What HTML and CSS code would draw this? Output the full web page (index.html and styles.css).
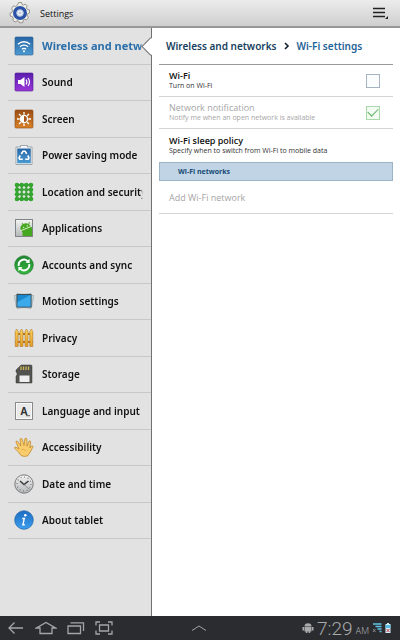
FILE: index.html
```
<!DOCTYPE html>
<html lang="en">

<head>
  <meta charset="UTF-8">
  <meta name="viewport" content="width=device-width, initial-scale=1.0">
  <title>Settings</title>
  <link rel="stylesheet" href="styles.css">
</head>

<body>
  <!-- Shared gradients for the icons -->
  <svg class="defs" width="0" height="0" aria-hidden="true">
    <defs>
      <linearGradient id="blue" x2="0" y2="1"><stop stop-color="#2866a5"/><stop offset="1" stop-color="#4b9ad2"/></linearGradient>
      <linearGradient id="purple" x2="0" y2="1"><stop stop-color="#5a1fae"/><stop offset="1" stop-color="#9a35d8"/></linearGradient>
      <linearGradient id="orange" x2="0" y2="1"><stop stop-color="#9a4c14"/><stop offset="1" stop-color="#d98128"/></linearGradient>
      <linearGradient id="green" x2="0" y2="1"><stop stop-color="#1e8430"/><stop offset="1" stop-color="#35b53c"/></linearGradient>
      <linearGradient id="info" x2="0" y2="1"><stop stop-color="#1c6cc0"/><stop offset="1" stop-color="#3f9ff0"/></linearGradient>
      <linearGradient id="gold" x2="0" y2="1"><stop stop-color="#f9d25a"/><stop offset="1" stop-color="#e09c2c"/></linearGradient>
      <linearGradient id="silver" x2="0" y2="1"><stop stop-color="#f4f4f4"/><stop offset="1" stop-color="#b4b6b8"/></linearGradient>
    </defs>
  </svg>

  <header class="topbar">
    <svg class="logo" viewBox="0 0 22 22">
      <path d="M9.500 .5h3l.5 2 1.500.5L16.300 2l2 2-.9 1.800.8 1.600 2.300.6v3l-2 1-.3 1.600 1.200 1.900-1.700 2.300-2.200-.5-1.300.9-.4 2.300-3 .5-1.200-2-1.500-.2-2 1.200-2.300-1.800.5-2.200-.9-1.400-2.200-.6v-3l2-.9.4-1.700L2.600 6.300l1.800-2.400 2.200.6L8.500 3z" fill="#f1eee8" stroke="#8f8b84" stroke-width=".9" stroke-linejoin="round"/>
      <circle cx="11" cy="11" r="5.200" fill="none" stroke="#2b52a6" stroke-width="3.600"/>
      <circle cx="11" cy="11" r="3.300" fill="#f2f4f8" stroke="#93a7d4" stroke-width=".8"/>
      <circle cx="11" cy="11" r="1.500" fill="#c4cbdc"/>
    </svg>
    <h1 class="title">Settings</h1>
    <button class="menu-button" aria-label="Menu">
      <svg width="18" height="14" viewBox="0 0 18 14">
        <path d="M1 2.500h12M1 6.500h12M1 10.500h12" stroke="#222" stroke-width="1.300"/>
        <path d="M16 10v3h-3z" fill="#222"/>
      </svg>
    </button>
  </header>

  <div class="content">
    <nav class="sidebar">
      <ul class="menu">
        <li class="item active">
          <a href="#">
            <svg class="icon" viewBox="0 0 20 20">
              <rect x="1" y="1" width="18" height="18" rx="1" fill="url(#blue)" stroke="#2a5d91" stroke-width=".6"/>
              <path d="M4 8.2a8.6 8.6 0 0 1 12 0M6 10.8a5.6 5.6 0 0 1 8 0M8 13.2a2.8 2.8 0 0 1 4 0" fill="none" stroke="#fff" stroke-width="1.4"/>
              <circle cx="10" cy="15.3" r="1" fill="#fff"/>
            </svg>
            <span class="label">Wireless and networks</span>
          </a>
        </li>
        <li class="item">
          <a href="#">
            <svg class="icon" viewBox="0 0 20 20">
              <rect x="1" y="1" width="18" height="18" rx="1" fill="url(#purple)" stroke="#4d1b90" stroke-width=".6"/>
              <path d="M4 8h2.5L10.500 5v10L6.500 12H4z" fill="#fff"/>
              <path d="M12 7.500q1.800 2.500 0 5M14 6q3 4 0 8" fill="none" stroke="#fff" stroke-width="1.200"/>
            </svg>
            <span class="label">Sound</span>
          </a>
        </li>
        <li class="item">
          <a href="#">
            <svg class="icon" viewBox="0 0 20 20">
              <rect x="1" y="1" width="18" height="18" rx="1" fill="url(#orange)" stroke="#8b4a18" stroke-width=".6"/>
              <path d="M10 3v2.500M10 14.500V17M3 10h2.500M14.500 10H17M5 5l1.800 1.800M13.200 13.200L15 15M15 5l-1.800 1.800M5 15l1.800-1.800" stroke="#fff" stroke-width="1.300"/>
              <circle cx="10" cy="10" r="3.600" fill="#a75418" stroke="#fff" stroke-width="1.400"/>
              <path d="M10 6.400a3.600 3.600 0 0 0 0 7.200z" fill="#fff"/>
            </svg>
            <span class="label">Screen</span>
          </a>
        </li>
        <li class="item">
          <a href="#">
            <svg class="icon" viewBox="0 0 20 20">
              <path d="M2 2h4.500V.5h7V2H18v17.500H2z" fill="#f4f7f9" stroke="#8b959c" stroke-width=".8"/>
              <rect x="3.200" y="3.500" width="13.600" height="14.800" fill="url(#blue)"/>
              <path d="M7.300 9L9 6.300h2.200l1.500 2.500M13.700 10.500l1.300 2.300-.8 1.500h-3M8.800 14.300H5.800L5 12.800l1.300-2.300" fill="none" stroke="#fff" stroke-width="1.600" stroke-linejoin="round"/>
            </svg>
            <span class="label">Power saving mode</span>
          </a>
        </li>
        <li class="item">
          <a href="#">
            <svg class="icon" viewBox="0 0 20 20">
              <path d="M3 3h14v14H3zM3 7.700h14M3 12.300h14M7.700 3v14M12.300 3v14" fill="none" stroke="#3b9a37" stroke-width="1.800"/>
              <g fill="#35a532">
                <circle cx="3" cy="3" r="2.300"/><circle cx="7.700" cy="3" r="2.300"/><circle cx="12.300" cy="3" r="2.300"/><circle cx="17" cy="3" r="2.300"/>
                <circle cx="3" cy="7.700" r="2.300"/><circle cx="17" cy="7.700" r="2.300"/><circle cx="7.700" cy="7.700" r="1.700"/><circle cx="12.300" cy="7.700" r="1.700"/>
                <circle cx="3" cy="12.300" r="2.300"/><circle cx="17" cy="12.300" r="2.300"/><circle cx="7.700" cy="12.300" r="1.700"/><circle cx="12.300" cy="12.300" r="1.700"/>
                <circle cx="3" cy="17" r="2.300"/><circle cx="7.700" cy="17" r="2.300"/><circle cx="12.300" cy="17" r="2.300"/><circle cx="17" cy="17" r="2.300"/>
              </g>
            </svg>
            <span class="label">Location and security</span>
          </a>
        </li>
        <li class="item">
          <a href="#">
            <svg class="icon" viewBox="0 0 20 20">
              <rect x="1.500" y="1.500" width="17" height="17" fill="url(#silver)" stroke="#7f8489"/>
              <g fill="#46a821">
                <path d="M6.500 11.500A5.300 5.300 0 0 1 16 7.500l2 2V18H8.500v-3.500z"/>
                <path d="M8 5l2 3M15.500 4l-1 3" stroke="#46a821" stroke-width=".9"/>
              </g>
              <path d="M6.500 12.800l11-4.500" stroke="#e6f3dc" stroke-width=".9"/>
              <circle cx="9.700" cy="9.300" r=".6" fill="#fff"/><circle cx="13.300" cy="7.900" r=".6" fill="#fff"/>
            </svg>
            <span class="label">Applications</span>
          </a>
        </li>
        <li class="item">
          <a href="#">
            <svg class="icon" viewBox="0 0 20 20">
              <circle cx="10" cy="10" r="9.300" fill="url(#green)" stroke="#1c752b" stroke-width=".6"/>
              <path d="M4.800 11A5.300 5.300 0 0 1 13.500 6M15.200 9A5.300 5.300 0 0 1 6.500 14" fill="none" stroke="#fff" stroke-width="1.900"/>
              <path d="M11.500 7.800L15.600 8V3.800zM8.500 12.200L4.400 12v4.200z" fill="#fff"/>
            </svg>
            <span class="label">Accounts and sync</span>
          </a>
        </li>
        <li class="item">
          <a href="#">
            <svg class="icon" viewBox="0 0 20 20">
              <path d="M0 4.500l17-2 1 13-15 2zM3 2.500l17 2-3 13-15-2z" fill="#c3d1d8" stroke="#8798a1" stroke-width=".5"/>
              <path d="M2.500 3h15v13.500h-15z" fill="#3d4c56"/>
              <path d="M3.500 4h13v11.500h-13z" fill="#1989cf"/>
              <path d="M3.500 15.500V11L16.500 4v11.500z" fill="#3caaea"/>
            </svg>
            <span class="label">Motion settings</span>
          </a>
        </li>
        <li class="item">
          <a href="#">
            <svg class="icon" viewBox="0 0 20 20">
              <path d="M1 6h18M1 14h18" stroke="#bb7820" stroke-width="2"/>
              <path d="M1.200 18.500v-15L2.700 1l1.500 2.500v15zM6 18.500v-15L7.500 1 9 3.500v15zM11 18.500v-15L12.500 1 14 3.500v15zM15.800 18.500v-15L17.300 1l1.500 2.500v15z" fill="url(#gold)" stroke="#a86c1c" stroke-width=".5"/>
            </svg>
            <span class="label">Privacy</span>
          </a>
        </li>
        <li class="item">
          <a href="#">
            <svg class="icon" viewBox="0 0 20 20">
              <path d="M7 1h10q1 0 1 1v17H2v-7l1-1V9L2 8V6z" fill="#53534f" stroke="#3a3a38" stroke-width=".5"/>
              <path d="M7 2.500V6M9.500 2.500V6M12 2.500V6M14.500 2.500V6" stroke="#cdb558" stroke-width="1.300"/>
              <path d="M5.500 11.500h10V18h-10z" fill="#efefef"/>
            </svg>
            <span class="label">Storage</span>
          </a>
        </li>
        <li class="item">
          <a href="#">
            <svg class="icon" viewBox="0 0 20 20">
              <rect x="1.500" y="1.500" width="17" height="17" fill="#e9e9e9" stroke="#888a8c"/>
              <rect x="2.500" y="2.500" width="15" height="15" fill="none" stroke="#f9f9f9"/>
              <text class="key-letter" x="10" y="13.500" text-anchor="middle">A</text>
              <path d="M12 14.700h4" stroke="#333" stroke-width=".8"/>
            </svg>
            <span class="label">Language and input</span>
          </a>
        </li>
        <li class="item">
          <a href="#">
            <svg class="icon" viewBox="0 0 20 20">
              <path d="M7 18.500L4.500 15 .8 11.500q-.6-1.700 1.200-1.300L5 12 2 5.200q0-1.900 1.800-.7L6.800 9 6 2.200q.9-1.900 2.200 0L10 8.500l.8-6.700q1.300-1.500 2.100.1L13 9.200l2-5q1.500-1 1.700.8L15.800 11l1.500-2q1.700-.6 1.700.8L16.300 15l-2.800 4q-3.500 1-6.500-.5z" fill="#f9cd6c" stroke="#b98022" stroke-width=".7"/>
              <path d="M7 13q3-2 5 1" fill="none" stroke="#dda23c" stroke-width=".7"/>
            </svg>
            <span class="label">Accessibility</span>
          </a>
        </li>
        <li class="item">
          <a href="#">
            <svg class="icon" viewBox="0 0 20 20">
              <circle cx="10" cy="10" r="9.200" fill="url(#silver)" stroke="#77797b"/>
              <circle cx="10" cy="10" r="7" fill="none" stroke="#666" stroke-width="1.200" stroke-dasharray=".8 2.865"/>
              <path d="M6 7l4 3.500L14.500 7" fill="none" stroke="#333" stroke-width="1.400"/>
              <path d="M9 9.500l6.500 6" stroke="#777" stroke-width=".7"/>
            </svg>
            <span class="label">Date and time</span>
          </a>
        </li>
        <li class="item">
          <a href="#">
            <svg class="icon" viewBox="0 0 20 20">
              <circle cx="10" cy="10" r="9.300" fill="url(#info)" stroke="#2465a3" stroke-width=".7"/>
              <circle cx="11.300" cy="5.200" r="1.300" fill="#fff"/>
              <path d="M8.300 8.500h2L8.900 14.700h1.900" fill="none" stroke="#fff" stroke-width="1.400"/>
            </svg>
            <span class="label">About tablet</span>
          </a>
        </li>
      </ul>
    </nav>

    <main class="panel">
      <h2 class="breadcrumb">
        <a href="#">Wireless and networks</a>
        <svg width="6" height="8" viewBox="0 0 6 8"><path d="M1 1l3 3-3 3" fill="none" stroke="#123" stroke-width="1.600"/></svg>
        <span class="current">Wi-Fi settings</span>
      </h2>

      <label class="row" for="wifi">
        <span class="text">
          <span class="name">Wi-Fi</span>
          <span class="hint">Turn on Wi-Fi</span>
        </span>
        <input type="checkbox" class="check" id="wifi">
      </label>
      <label class="row disabled" for="notify">
        <span class="text">
          <span class="name">Network notification</span>
          <span class="hint">Notify me when an open network is available</span>
        </span>
        <input type="checkbox" class="check" id="notify" checked disabled>
      </label>
      <div class="row last">
        <span class="text">
          <span class="name">Wi-Fi sleep policy</span>
          <span class="hint">Specify when to switch from Wi-Fi to mobile data</span>
        </span>
      </div>
      <h3 class="section">Wi-Fi networks</h3>
      <div class="row network disabled">
        <span class="name">Add Wi-Fi network</span>
      </div>
    </main>
  </div>

  <footer class="navbar">
    <div class="keys">
      <button aria-label="Back">
        <svg width="18" height="14" viewBox="0 0 18 14"><path d="M16 7H2M7.500 1.500L2 7l5.500 5.500" fill="none" stroke="#a4a5a7" stroke-width="1.300"/></svg>
      </button>
      <button aria-label="Home">
        <svg width="22" height="14" viewBox="0 0 22 14"><path d="M5 7H1.500L11 1.500 20.500 7H17v5.500H5z" fill="none" stroke="#a4a5a7" stroke-width="1.300"/></svg>
      </button>
      <button aria-label="Recent apps">
        <svg width="18" height="14" viewBox="0 0 18 14"><path d="M1 5h12.500v7.500H1zM3.500 1.800h13V10" fill="none" stroke="#a4a5a7" stroke-width="1.300"/></svg>
      </button>
      <button aria-label="Screenshot">
        <svg width="18" height="14" viewBox="0 0 18 14"><path d="M4.500 4h9v6h-9zM5 1H1v3.500M13 1h4v3.500M5 13H1V9.500M13 13h4V9.500" fill="none" stroke="#a4a5a7" stroke-width="1.300"/></svg>
      </button>
    </div>
    <button aria-label="Show tray">
      <svg width="16" height="8" viewBox="0 0 16 8"><path d="M1 6.500L8 2l7 4.500" fill="none" stroke="#a4a5a7"/></svg>
    </button>
    <div class="status">
      <svg width="12" height="12" viewBox="0 0 12 12">
        <path d="M2.500 4.500a3.500 3.300 0 0 1 7 0zM2.500 5h7v4.500h-7zM.5 5h1.500v3.500H.5zM10 5h1.500v3.500H10zM3.800 9h1.600v2H3.800zM6.600 9h1.600v2H6.600z" fill="#a9aaac"/>
      </svg>
      <span class="time">7:29</span>
      <span class="ampm">AM</span>
      <svg width="10" height="12" viewBox="0 0 10 12">
        <path d="M1 2h8.500M3.500 4.500h6M5.500 7h4M7.500 9.500h2" stroke="#5fc5e8" stroke-width="1.700"/>
        <path d="M1 7l2.500 3M3.500 7L1 10" stroke="#999" stroke-width=".8"/>
      </svg>
      <svg width="6" height="12" viewBox="0 0 6 12">
        <path d="M2 1h2v1h1.500v9H.5V2H2z" fill="#d5eef6"/>
        <path d="M.5 3h5v3h-5z" fill="#55bcdf"/>
        <path d="M1.500 7l3 3M4.500 7l-3 3" stroke="#c0394a"/>
      </svg>
    </div>
  </footer>
</body>

</html>
```
FILE: styles.css
```
* {
  box-sizing: border-box;
}

body {
  margin: 0;
  min-height: 100vh;
  display: flex;
  flex-direction: column;
  font-family: 'Noto Sans', 'Open Sans', sans-serif;
  font-size: 10px;
  color: #111;
  background-color: #fff;
}

h1,
h2,
h3,
ul {
  margin: 0;
  padding: 0;
  font-size: inherit;
  font-weight: 600;
}

a {
  color: inherit;
  text-decoration: none;
}

svg {
  display: block;
  flex-shrink: 0;
}

button {
  padding: 0;
  border: none;
  background: none;
  cursor: pointer;
}

.defs {
  position: absolute;
}

/* Title bar */
.topbar {
  display: flex;
  align-items: center;
  height: 28px;
  padding: 0 10px 0 9px;
  background: linear-gradient(#ececec, #cfcfcf);
  border-bottom: 2px solid #979797;
}

.logo {
  width: 22px;
  height: 22px;
}

.title {
  margin-left: 9px;
  font-family: 'Open Sans', sans-serif;
  font-size: 9px;
  font-weight: 500;
}

.menu-button {
  margin-left: auto;
}

.content {
  flex: 1;
  display: flex;
}

/* Left menu */
.sidebar {
  width: 38%;
  background-color: #e2e2e2;
  border-right: 1px solid #707070;
}

.menu {
  display: flex;
  flex-direction: column;
  height: 511px;
  padding-left: 8px;
  list-style: none;
}

.item {
  position: relative;
  flex: 1;
  border-bottom: 1px solid #c6c8ca;
}

.item a {
  display: flex;
  align-items: center;
  gap: 8px;
  height: 100%;
  padding: 0 8px 0 6px;
}

.icon {
  width: 20px;
  height: 20px;
}

.label {
  flex: 1;
  overflow: hidden;
  white-space: nowrap;
  /* long names fade out at the edge */
  mask-image: linear-gradient(to left, transparent, #000 3px);
}

.active {
  color: #2a6faa;
  font-size: 11px;
  font-weight: 700;
}

/* White arrow that points from the panel to the open item */
.active::after {
  content: '';
  position: absolute;
  top: 12px;
  right: -6px;
  width: 12px;
  height: 12px;
  background-color: #fff;
  border-left: 1px solid #707070;
  border-bottom: 1px solid #707070;
  transform: rotate(45deg);
}

.key-letter {
  font-size: 10px;
  font-weight: 700;
  fill: #333;
}

/* Right panel */
.panel {
  position: relative;
  flex: 1;
  padding: 0 7px;
  background-color: #fff;
}

.breadcrumb {
  display: flex;
  align-items: center;
  gap: 7px;
  height: 37px;
  padding-left: 7px;
  color: #183f60;
  white-space: nowrap;
  border-bottom: 1px solid #999;
}

.current {
  color: #1e6296;
}

.row {
  display: flex;
  align-items: center;
  height: 32px;
  padding: 0 13px 0 10px;
  font-family: 'Open Sans', sans-serif;
  border-bottom: 1px solid #d2d5d5;
}

.last,
.network {
  height: 33px;
}

.last {
  border-bottom: none;
}

.text {
  flex: 1;
}

.name {
  display: block;
  font-size: 9px;
  font-weight: 600;
  line-height: 11px;
}

.hint {
  display: block;
  font-size: 7px;
  line-height: 10px;
  color: #333;
}

.disabled,
.disabled .hint {
  color: #a6a6a6;
}

.disabled .name {
  font-weight: 400;
}

.check {
  appearance: none;
  width: 14px;
  height: 14px;
  margin: 0;
  background-color: #fbfcfd;
  border: 1px solid #a6b3c2;
}

.check:checked {
  display: flex;
  align-items: center;
  justify-content: center;
  background-color: #f2fbf2;
  border-color: #a9d8a9;
}

.check:checked::after {
  content: '';
  width: 9px;
  height: 5px;
  margin-bottom: 3px;
  border-left: 1px solid #5fae5f;
  border-bottom: 1px solid #5fae5f;
  transform: rotate(-45deg);
}

.section {
  height: 19px;
  padding-left: 18px;
  font-family: 'Open Sans', sans-serif;
  font-size: 7px;
  font-weight: 700;
  line-height: 17px;
  color: #174a74;
  background-color: #c0d4e5;
  border: 1px solid #9db4c4;
}

/* System bar */
.navbar {
  display: grid;
  grid-template-columns: 1fr auto 1fr;
  align-items: center;
  height: 24px;
  padding: 0 9px 0 7px;
  color: #a9aaac;
  background-color: #2b2c2f;
}

.keys {
  display: flex;
  align-items: center;
  gap: 10px;
}

.status {
  display: flex;
  align-items: center;
  justify-content: flex-end;
  gap: 3px;
  font-family: Roboto, sans-serif;
  font-weight: 300;
}

.time {
  font-size: 19px;
}

.ampm {
  font-size: 9px;
  padding-top: 5px;
}
```
